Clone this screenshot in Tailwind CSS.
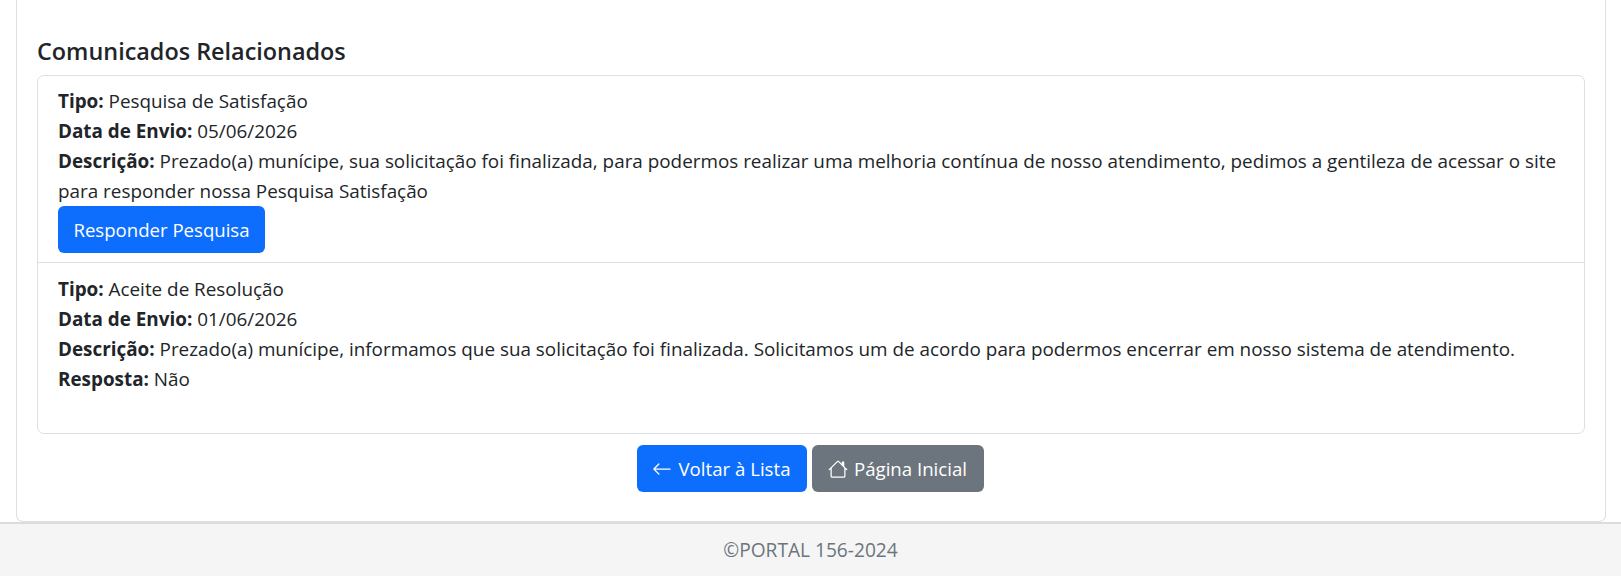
<!DOCTYPE html>
<html lang="pt-BR">
  <head>
    <meta charset="UTF-8" />
    <script src="https://cdn.jsdelivr.net/npm/@tailwindcss/browser@4"></script>
    <title>Portal 156</title>
  </head>
  <body class="bg-white font-['Open_Sans',sans-serif] text-[18.87px] leading-[30px] text-[#212529] h-[576px] overflow-hidden">
    <main class="pl-4 pr-[15px] h-[522px]">
      <div class="h-full border border-t-0 border-[#dedfe0] rounded-b-[7px] px-5 pt-[33px]">
        <h5 class="text-[23.4px] leading-[36px] font-semibold">Comunicados Relacionados</h5>
        <ul class="mt-[6px] border border-[#dedfe0] rounded-[7px] h-[359px]">
          <li class="px-5 pt-[10px] pb-[9px] border-b border-[#dedfe0]">
            <div><b>Tipo:</b> Pesquisa de Satisfação</div>
            <div><b>Data de Envio:</b> 05/06/2026</div>
            <div><b>Descrição:</b> Prezado(a) munícipe, sua solicitação foi finalizada, para podermos realizar uma melhoria contínua de nosso atendimento, pedimos a gentileza de acessar o site para responder nossa Pesquisa Satisfação</div>
            <button class="block h-[47px] w-[207px] rounded-[6px] bg-[#0d6efd] text-white text-[18.6px]">Responder Pesquisa</button>
          </li>
          <li class="px-5 pt-[11px]">
            <div><b>Tipo:</b> Aceite de Resolução</div>
            <div><b>Data de Envio:</b> 01/06/2026</div>
            <div><b>Descrição:</b> Prezado(a) munícipe, informamos que sua solicitação foi finalizada. Solicitamos um de acordo para podermos encerrar em nosso sistema de atendimento.</div>
            <div><b>Resposta:</b> Não</div>
          </li>
        </ul>
        <div class="mt-[11px] pr-[2px] flex justify-center gap-[5px] text-[18.65px]">
          <a class="h-[47px] w-[170px] flex items-center justify-center gap-[6px] rounded-[6px] bg-[#0d6efd] text-white">
            <svg class="w-5 h-5" viewBox="0 0 16 16" fill="currentColor"><path fill-rule="evenodd" d="M15 8a.5.5 0 0 0-.5-.5H2.707l3.147-3.146a.5.5 0 1 0-.708-.708l-4 4a.5.5 0 0 0 0 .708l4 4a.5.5 0 0 0 .708-.708L2.707 8.5H14.5A.5.5 0 0 0 15 8"/></svg>
            <span>Voltar à Lista</span>
          </a>
          <a class="h-[47px] w-[172px] flex items-center justify-center gap-[6px] rounded-[6px] bg-[#6c757d] text-white">
            <svg class="w-5 h-5" viewBox="0 0 16 16" fill="currentColor"><path d="M8.707 1.5a1 1 0 0 0-1.414 0L.646 8.146a.5.5 0 0 0 .708.708L2 8.207V13.5A1.5 1.5 0 0 0 3.5 15h9a1.5 1.5 0 0 0 1.5-1.5V8.207l.646.647a.5.5 0 0 0 .708-.708L13 5.793V2.5a.5.5 0 0 0-.5-.5h-1a.5.5 0 0 0-.5.5v1.293zM13 7.207V13.5a.5.5 0 0 1-.5.5h-9a.5.5 0 0 1-.5-.5V7.207l5-5z"/></svg>
            <span>Página Inicial</span>
          </a>
        </div>
      </div>
    </main>
    <footer class="h-[54px] bg-[#f5f5f5] border-t-2 border-[#dcdcdc] flex items-center justify-center text-[#6c757d] text-[19.15px]">©PORTAL 156-2024</footer>
  </body>
</html>
